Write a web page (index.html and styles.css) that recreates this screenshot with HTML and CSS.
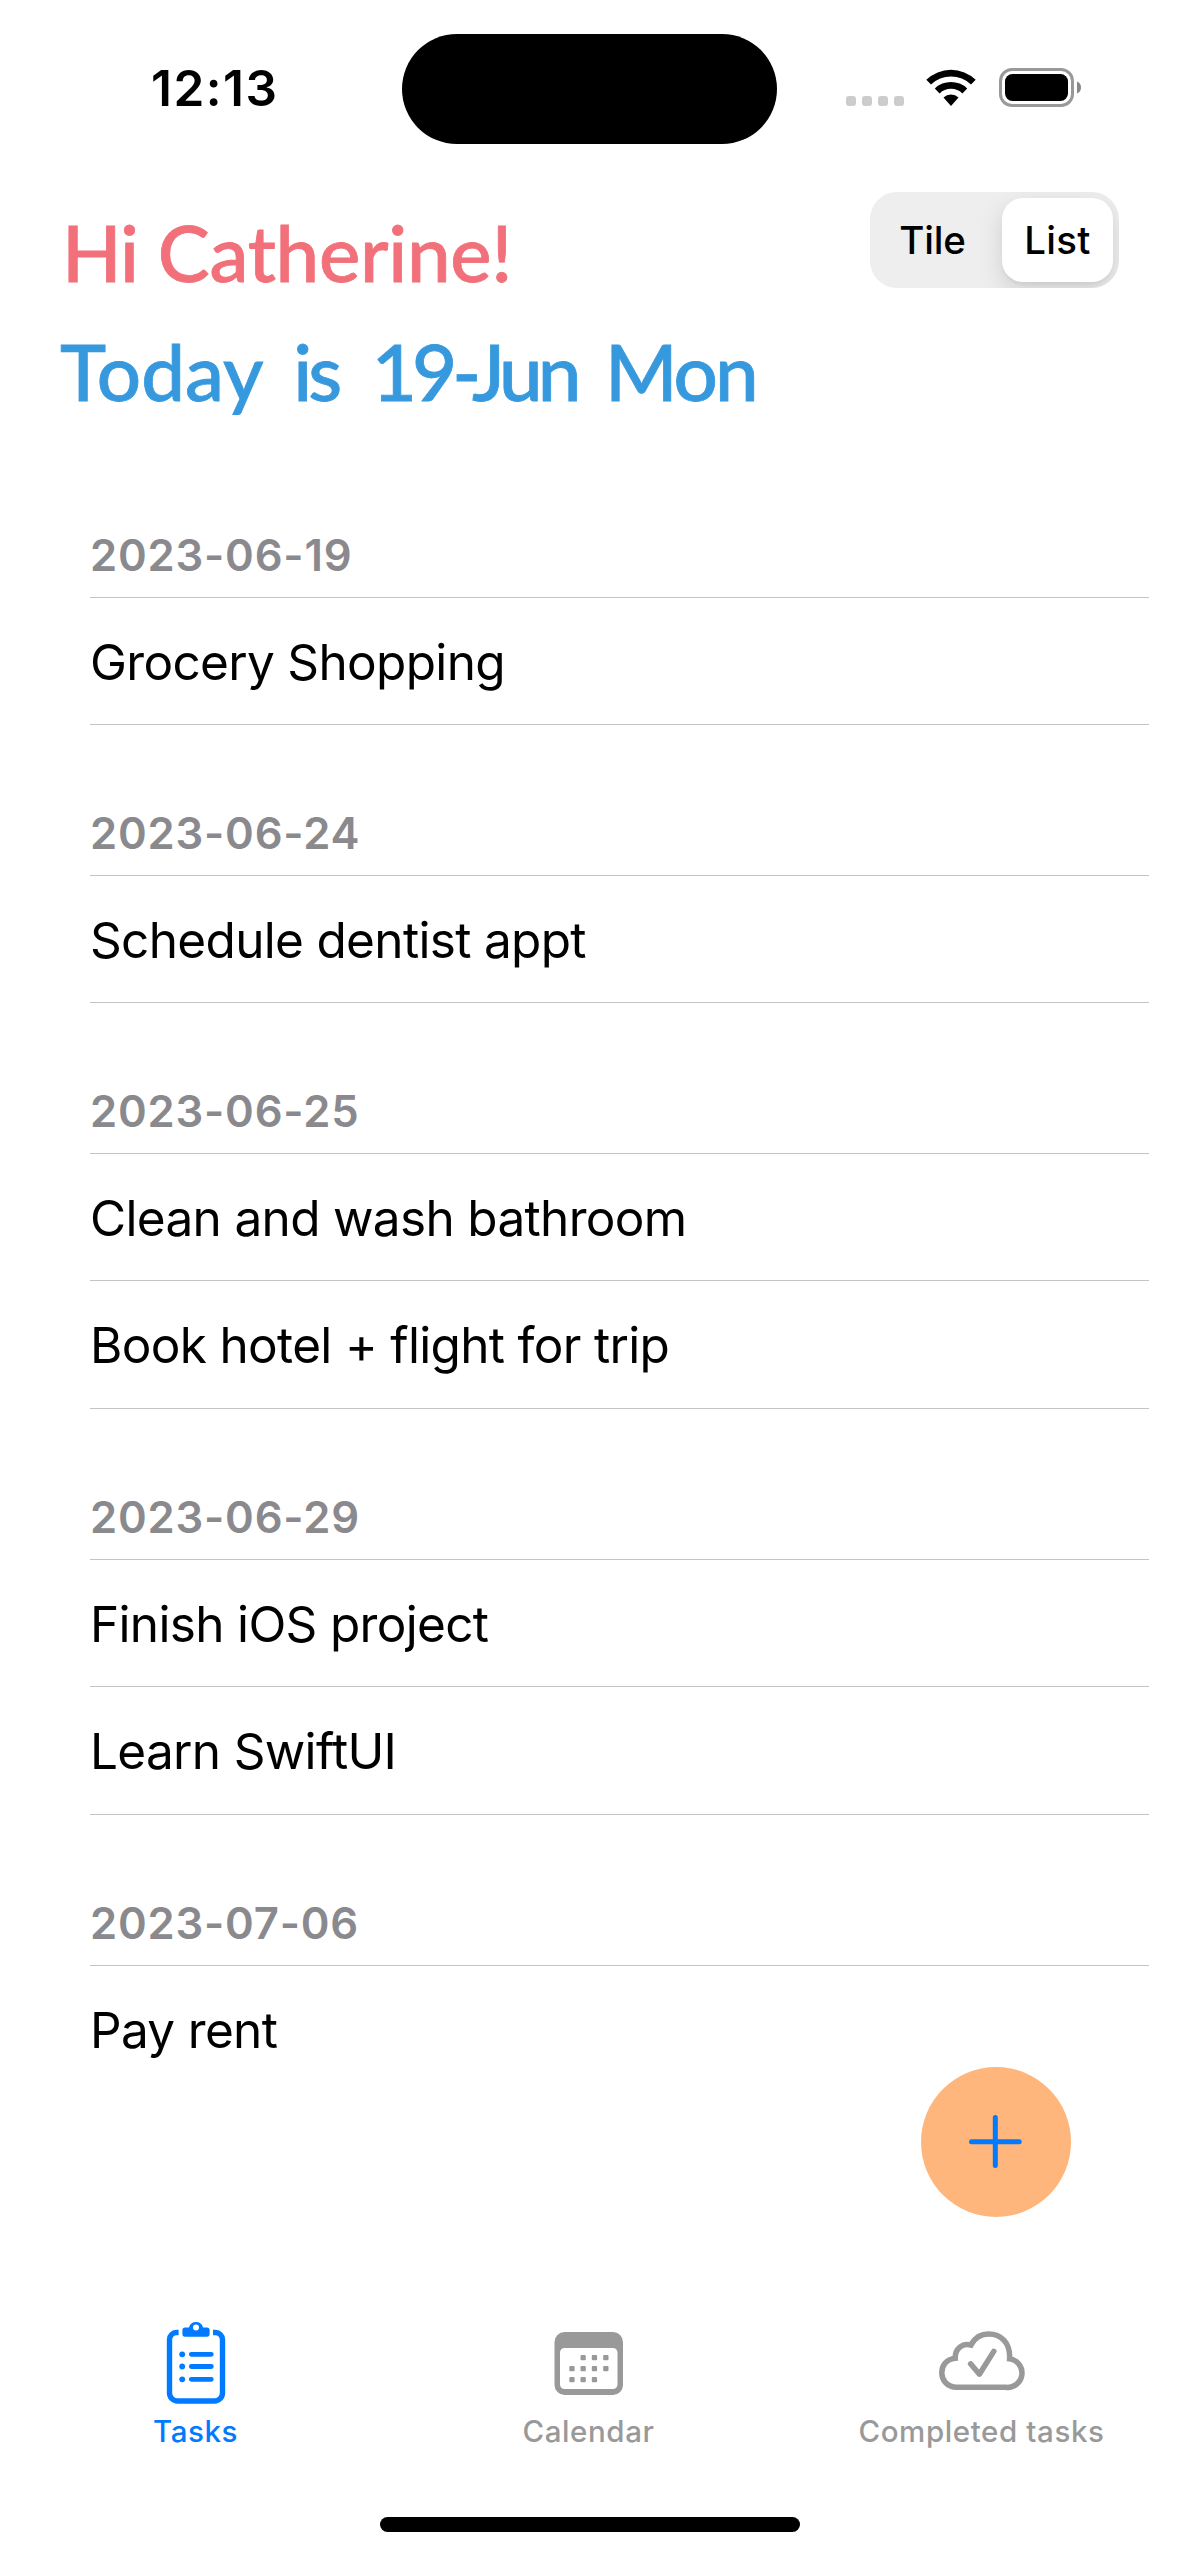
FILE: index.html
```html
<!DOCTYPE html>
<html lang="en">
<head>
<meta charset="utf-8">
<title>Tasks</title>
<link rel="stylesheet" href="styles.css">
</head>
<body>
<div class="screen">
  <div class="status">
    <span class="time">12:13</span>
    <span class="island"></span>
    <div class="indicators">
      <div class="signal"><i></i><i></i><i></i><i></i></div>
      <svg class="wifi" viewBox="0 0 50 38">
        <path d="M0.3 10.8a35.5 35.5 0 0 1 49.4 0l-4.7 4.8a28.8 28.8 0 0 0-40 0z"/>
        <path d="M8.8 19.5a23.2 23.2 0 0 1 32.4 0l-4.8 4.9a16.4 16.4 0 0 0-22.8 0z"/>
        <path d="M17.5 28.6a10.8 10.8 0 0 1 15 0L25 37z"/>
      </svg>
      <svg class="battery" viewBox="0 0 83 39">
        <rect x="1.5" y="1.5" width="72" height="36" rx="11.5" fill="none" stroke="#999" stroke-width="3"/>
        <rect x="6" y="6" width="63" height="27" rx="7.5"/>
        <path d="M78 13.5a6.5 6.5 0 0 1 0 12z" fill="#888"/>
      </svg>
    </div>
  </div>

  <header class="top">
    <div class="greeting">
      <h1 class="hi"><span class="hello">Hi</span> <span class="name">Catherine!</span></h1>
      <h2 class="today">Today <span class="is">is</span> <span class="date">19-Jun</span> <span class="day">Mon</span></h2>
    </div>
    <div class="segmented">
      <span class="segment">Tile</span>
      <span class="segment selected">List</span>
    </div>
  </header>

  <main class="list">
    <section>
      <h3>2023-06-19</h3>
      <p>Grocery Shopping</p>
    </section>
    <section>
      <h3>2023-06-24</h3>
      <p>Schedule dentist appt</p>
    </section>
    <section>
      <h3>2023-06-25</h3>
      <p>Clean and wash bathroom</p>
      <p>Book hotel + flight for trip</p>
    </section>
    <section>
      <h3>2023-06-29</h3>
      <p>Finish iOS project</p>
      <p>Learn SwiftUI</p>
    </section>
    <section>
      <h3>2023-07-06</h3>
      <p>Pay rent</p>
    </section>
  </main>

  <div class="add">
    <svg viewBox="0 0 150 150"><path d="M50.5 74.700h47.700M74.300 50.500v48" fill="none" stroke="#007aff" stroke-width="5" stroke-linecap="round"/></svg>
  </div>

  <nav class="tabs">
    <div class="tab active">
      <svg viewBox="0 0 90 90">
        <path d="M27.600 15.500H25.500a7 7 0 0 0-7 7v53.500a8 8 0 0 0 8 8h37a8 8 0 0 0 8-8v-53.500a7 7 0 0 0-7-7h-2.500" fill="none" stroke="currentColor" stroke-width="5.400"/>
        <path fill="currentColor" fill-rule="evenodd" d="M34 10.500h4a7.200 7.200 0 0 1 14 0h4a2.600 2.600 0 0 1 2.600 2.600v4a2.600 2.600 0 0 1-2.600 2.600H34a2.600 2.600 0 0 1-2.600-2.600v-4a2.600 2.600 0 0 1 2.600-2.600zM45 7.500a3 3 0 1 0 0 6 3 3 0 1 0 0-6z"/>
        <path d="M40.300 37.300h20M40.300 49.500h20M40.300 62.300h20" fill="none" stroke="currentColor" stroke-width="4.800" stroke-linecap="round"/>
        <g fill="currentColor"><circle cx="31.200" cy="37.300" r="2.900"/><circle cx="31.200" cy="49.500" r="2.900"/><circle cx="31.200" cy="62.300" r="2.900"/></g>
      </svg>
      <span>Tasks</span>
    </div>
    <div class="tab">
      <svg viewBox="0 0 90 90">
        <path fill="currentColor" fill-rule="evenodd" d="M20.500 15h48.500a10 10 0 0 1 10 10v43a10 10 0 0 1-10 10H20.500a10 10 0 0 1-10-10V25a10 10 0 0 1 10-10zM20.500 31a4.500 4.500 0 0 0-4.500 4.500v32a4.500 4.500 0 0 0 4.500 4.500h48.500a4.500 4.500 0 0 0 4.500-4.500v-32a4.500 4.500 0 0 0-4.500-4.500z"/>
        <g fill="currentColor">
          <rect x="36.500" y="38" width="5.300" height="5.300" rx="1"/><rect x="47.800" y="38" width="5.300" height="5.300" rx="1"/><rect x="59.200" y="38" width="5.300" height="5.300" rx="1"/>
          <rect x="25.300" y="49" width="5.300" height="5.300" rx="1"/><rect x="36.500" y="49" width="5.300" height="5.300" rx="1"/><rect x="47.800" y="49" width="5.300" height="5.300" rx="1"/><rect x="59.200" y="49" width="5.300" height="5.300" rx="1"/>
          <rect x="25.300" y="60" width="5.300" height="5.300" rx="1"/><rect x="36.500" y="60" width="5.300" height="5.300" rx="1"/><rect x="47.800" y="60" width="5.300" height="5.300" rx="1"/>
        </g>
      </svg>
      <span>Calendar</span>
    </div>
    <div class="tab">
      <svg viewBox="3 0 90 90">
        <g fill="none" stroke="currentColor" stroke-width="5.500">
          <path d="M21.600 70.300h50a14.200 14.200 0 0 0 4-28.500c1-16.500-9.500-24.800-20.600-24.800-8 0-14.500 4.200-18 11-8.500-2.500-16 3.700-15.800 13.200-18.200 1.800-17.700 27.600.4 29.100z"/>
          <path d="M36.600 46.800l8.800 10.400 14.400-22.800" stroke-linecap="round" stroke-linejoin="round"/>
        </g>
      </svg>
      <span>Completed tasks</span>
    </div>
  </nav>
  <div class="home"></div>
</div>
</body>
</html>
```
FILE: styles.css
```css
* { box-sizing: border-box; margin: 0; padding: 0; }
body { background: #fff; font-family: Inter, "Liberation Sans", sans-serif; color: #000; }
.screen { position: relative; width: 1179px; height: 2556px; overflow: hidden; display: flex; flex-direction: column; background: #fff; }

.status { height: 177px; padding-top: 34px; display: grid; grid-template-columns: 402px 375px 1fr; }
.time { padding: 24px 0 0 151px; font-size: 49.5px; line-height: 60px; font-weight: 600; letter-spacing: 1.5px; white-space: nowrap; }
.island { height: 110px; border-radius: 55px; background: #000; }
.indicators { display: flex; align-items: flex-start; padding: 34px 0 0 69px; }
.signal { display: flex; gap: 6px; padding-top: 28px; }
.signal i { width: 10px; height: 10px; border-radius: 3px; background: #ccc; }
.wifi { width: 50px; height: 38px; margin-left: 21.5px; margin-top: 1px; }
.battery { width: 83px; height: 39px; margin-left: 23.5px; }

.top { height: 323px; display: flex; justify-content: space-between; padding: 15px 60px 0 60px; }
.greeting { font-family: Futura, Lato, sans-serif; white-space: nowrap; }
.hi, .today { font-size: 78px; line-height: 120px; font-weight: 500; -webkit-text-stroke: 0.8px currentColor; }
.hi { height: 119px; color: #f1707a; }
.today { color: #3799dd; }
.hello { margin-left: 2px; letter-spacing: -1px; }
.name { letter-spacing: -0.3px; }
.is { margin-left: 12px; letter-spacing: -4px; }
.date { margin-left: 14px; letter-spacing: -5px; }
.day { margin-left: 9px; letter-spacing: -3px; }
.segmented { width: 249px; height: 96px; padding: 6px; border-radius: 27px; background: #eee; display: grid; grid-template-columns: 126px 111px; overflow: hidden; }
.segment { padding-right: 13px; font-size: 38.5px; line-height: 84px; text-align: center; font-weight: 450; letter-spacing: -0.2px; border-radius: 21px; }
.selected { padding-right: 0; background: #fff; font-weight: 550; letter-spacing: 0.3px; box-shadow: 0 9px 24px rgba(0,0,0,.13), 0 3px 3px rgba(0,0,0,.04); }

.list { height: 1567px; padding: 0 30px 0 90px; }
.list h3 { border-bottom: 1px solid #c4c4c6; color: #8a8a8e; font-size: 43.6px; font-weight: 600; line-height: 54px; letter-spacing: 0.8px; height: 151px; padding-top: 82px; }
.list section:first-child h3 { height: 98px; padding-top: 29px; }
.list p { border-bottom: 1px solid #c4c4c6; height: 128px; font-size: 49.5px; line-height: 128px; letter-spacing: -0.67px; white-space: nowrap; }
.list h3 + p { height: 127px; }
.list section:last-child p { border-bottom: 0; }

.add { position: absolute; left: 921px; top: 2067px; width: 150px; height: 150px; border-radius: 50%; background: #ffb67c; }
.add svg { display: block; width: 150px; height: 150px; }

.tabs { height: 450px; padding-top: 250px; margin-left: -1px; display: grid; grid-template-columns: repeat(3, 393px); color: #999; }
.tab { display: flex; flex-direction: column; align-items: center; }
.tab svg { width: 90px; height: 90px; }
.tab span { margin-top: 6px; font-size: 29.5px; line-height: 36px; font-weight: 500; letter-spacing: 0.6px; white-space: nowrap; }
.active { color: #007aff; }
.home { flex: none; width: 420px; height: 15px; border-radius: 8px; background: #000; margin-left: 380px; }
```
